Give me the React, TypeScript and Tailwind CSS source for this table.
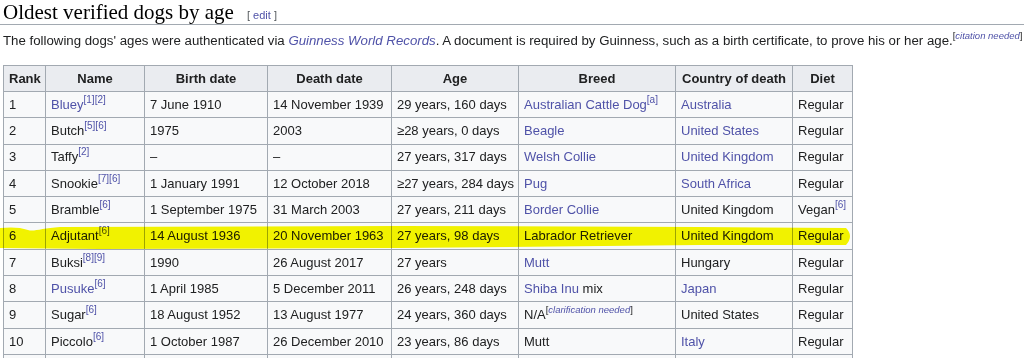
import React from "react";

const link = "text-[#4f52a8]";

const Ref = ({ n }: { n: string[] }) => (
  <sup className={`text-[10px] -top-[6px] ${link}`}>
    {n.map((x) => `[${x}]`).join("")}
  </sup>
);

const Note = ({ text }: { text: string }) => (
  <sup className="text-[9.5px] -top-[6px] text-[#202122]">
    [<i className={link}>{text}</i>]
  </sup>
);

const A = ({ children }: { children: React.ReactNode }) => <span className={link}>{children}</span>;

type Row = {
  rank: string;
  name: React.ReactNode;
  birth: string;
  death: string;
  age: string;
  breed: React.ReactNode;
  country: React.ReactNode;
  diet: React.ReactNode;
};

const rows: Row[] = [
  { rank: "1", name: <><A>Bluey</A><Ref n={["1", "2"]} /></>, birth: "7 June 1910", death: "14 November 1939", age: "29 years, 160 days", breed: <><A>Australian Cattle Dog</A><Ref n={["a"]} /></>, country: <A>Australia</A>, diet: "Regular" },
  { rank: "2", name: <>Butch<Ref n={["5", "6"]} /></>, birth: "1975", death: "2003", age: "≥28 years, 0 days", breed: <A>Beagle</A>, country: <A>United States</A>, diet: "Regular" },
  { rank: "3", name: <>Taffy<Ref n={["2"]} /></>, birth: "–", death: "–", age: "27 years, 317 days", breed: <A>Welsh Collie</A>, country: <A>United Kingdom</A>, diet: "Regular" },
  { rank: "4", name: <>Snookie<Ref n={["7", "6"]} /></>, birth: "1 January 1991", death: "12 October 2018", age: "≥27 years, 284 days", breed: <A>Pug</A>, country: <A>South Africa</A>, diet: "Regular" },
  { rank: "5", name: <>Bramble<Ref n={["6"]} /></>, birth: "1 September 1975", death: "31 March 2003", age: "27 years, 211 days", breed: <A>Border Collie</A>, country: "United Kingdom", diet: <>Vegan<Ref n={["6"]} /></> },
  { rank: "6", name: <>Adjutant<Ref n={["6"]} /></>, birth: "14 August 1936", death: "20 November 1963", age: "27 years, 98 days", breed: "Labrador Retriever", country: "United Kingdom", diet: "Regular" },
  { rank: "7", name: <>Buksi<Ref n={["8", "9"]} /></>, birth: "1990", death: "26 August 2017", age: "27 years", breed: <A>Mutt</A>, country: "Hungary", diet: "Regular" },
  { rank: "8", name: <><A>Pusuke</A><Ref n={["6"]} /></>, birth: "1 April 1985", death: "5 December 2011", age: "26 years, 248 days", breed: <><A>Shiba Inu</A> mix</>, country: <A>Japan</A>, diet: "Regular" },
  { rank: "9", name: <>Sugar<Ref n={["6"]} /></>, birth: "18 August 1952", death: "13 August 1977", age: "24 years, 360 days", breed: <>N/A<Note text="clarification needed" /></>, country: "United States", diet: "Regular" },
  { rank: "10", name: <>Piccolo<Ref n={["6"]} /></>, birth: "1 October 1987", death: "26 December 2010", age: "23 years, 86 days", breed: "Mutt", country: <A>Italy</A>, diet: "Regular" },
  // next row only shows its top border in the crop
  { rank: "", name: "", birth: "", death: "", age: "", breed: "", country: "", diet: "" },
];

const headers = ["Rank", "Name", "Birth date", "Death date", "Age", "Breed", "Country of death", "Diet"];
const widths = ["w-[42px]", "w-[99px]", "w-[123px]", "w-[124px]", "w-[127px]", "w-[157px]", "w-[117px]", "w-[60px]"];

const td = "border border-[#a2a9b1] px-[5px] align-middle whitespace-nowrap";

export default function App() {
  return (
    <div className="relative w-[1024px] h-[358px] overflow-hidden bg-white text-[#202122] font-['Liberation_Sans',Arial,sans-serif] text-[13px]">
      <div className="flex items-baseline h-[25px] border-b border-[#a2a9b1] pl-[3px]">
        <h2 className="font-['Liberation_Serif','Times_New_Roman',serif] text-[21px] leading-[24px] text-black">
          Oldest verified dogs by age
        </h2>
        <span className="ml-[13px] text-[11px] text-[#54595d]">
          [ <span className={link}>edit</span> ]
        </span>
      </div>

      <p className="mt-[6px] pl-[3px] text-[13.25px] leading-[20px] whitespace-nowrap">
        The following dogs' ages were authenticated via <i className={link}>Guinness World Records</i>. A document is required by Guinness, such as a birth certificate, to prove his or her age.
        <Note text="citation needed" />
      </p>

      <table className="mt-[14px] ml-[3px] w-[850px] table-fixed border-collapse bg-[#f8f9fa]">
        <colgroup>
          {widths.map((w, i) => (
            <col key={i} className={w} />
          ))}
        </colgroup>
        <thead>
          <tr className="h-[26px] bg-[#eaecf0]">
            {headers.map((h) => (
              <th key={h} className={`${td} font-bold text-center`}>
                {h}
              </th>
            ))}
          </tr>
        </thead>
        <tbody>
          {rows.map((r, i) => (
            <tr key={i} className="h-[26.3px]">
              <td className={td}>{r.rank}</td>
              <td className={td}>{r.name}</td>
              <td className={td}>{r.birth}</td>
              <td className={td}>{r.death}</td>
              <td className={td}>{r.age}</td>
              <td className={td}>{r.breed}</td>
              <td className={td}>{r.country}</td>
              <td className={td}>{r.diet}</td>
            </tr>
          ))}
        </tbody>
      </table>

      {/* highlighter stroke over the Adjutant row */}
      <svg className="pointer-events-none absolute left-0 top-0 mix-blend-multiply" width="1024" height="358">
        <path
          d="M0,228 C10,227 20,227 28,230 C34,232 42,228 60,227 L400,226 L700,227 L846,228 Q854,236 846,245 L700,245 L400,248 L100,249 L0,248 Z"
          fill="#f8f800"
        />
      </svg>
    </div>
  );
}
